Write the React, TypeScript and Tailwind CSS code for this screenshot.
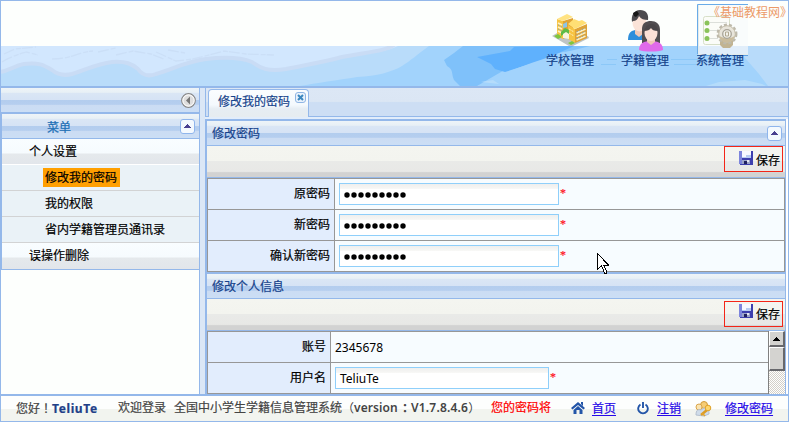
import type { ReactNode } from "react";

const line = "border-[#94b8ea]";
const panelBar =
  "bg-[linear-gradient(#eef4f8_0%,#e8f0f6_18%,#dae6f5_22%,#d6e3f5_48%,#b3cdee_50%,#b5ceef_68%,#cbdcf3_72%,#cbdef5_100%)]";

function CollapseButton() {
  return (
    <span className="flex h-[15px] w-[15px] shrink-0 items-center justify-center rounded-[3px] border border-[#8fb5ec] bg-[#f4f9fe]">
      <svg width="7" height="4" viewBox="0 0 7 4" shapeRendering="crispEdges">
        <path d="M3 0h1v1h1v1h1v1h1v1H0V3h1V2h1V1h1z" fill="#4a4090" />
      </svg>
    </span>
  );
}

function SchoolIcon() {
  return (
    <svg width="38" height="33" viewBox="0 0 38 33">
      <path d="M0 22 5 19l17 7 14-4 1 2-16 8-4 0z" fill="#bfc4c6" />
      <path d="M5 5 11 7v18l-6-3z" fill="#f7c443" />
      <path d="M11 7 21 4v17l-10 4z" fill="#e0a336" />
      <path d="M5 5 15 0l6 3-10 4z" fill="#ffe382" />
      <path d="M16 11l7 4v14l-7-4z" fill="#f7c443" />
      <path d="M23 15l12-5v14l-12 5z" fill="#e0a336" />
      <path d="M16 10l6-5 5 2 3-1 5 3-12 6z" fill="#ffdf74" />
      <path d="M6 9l4 2m-4 2 4 2m-4 2 4 2M24.500 19l9-4m-9 7.500 9-4m-9 7.500 9-4" stroke="#fff1c0" strokeWidth="1.800" />
      <path d="M6 11l4 2m-4 2 4 2M24.500 18l9-4m-9 7.500 9-4m-9 7.500 9-4" stroke="#8aa5ae" strokeDasharray="1.500 1.500" />
      <path d="M17 15l5 3m-5 1 5 3" stroke="#fff1c0" strokeDasharray="2 1" />
      <path d="M11 10l4-2v5l-4 1z" fill="#8cc4e8" />
      <path d="M9 18l4-4 4 2v5l-3-2-5 3z" fill="#5dbb48" />
      <path d="M11 20l3-2 3 2v5l-6-1z" fill="#f8f4df" />
      <path d="M2 22l4-2 4 3-4 2zm14 7 4-2 3 2-4 2z" fill="#7fc63e" />
    </svg>
  );
}

function PeopleIcon() {
  return (
    <svg width="37" height="42" viewBox="0 0 37 42">
      <path d="M1 30c0-8 4-10 9-10 6 0 10 3 10 10z" fill="#2f8edb" />
      <path d="M8 19h8v5l-4 3-4-3z" fill="#f0c8b8" />
      <ellipse cx="12.5" cy="13" rx="7" ry="8.5" fill="#fbe3d8" />
      <path d="M5 12C4 5 7 0 13 0c6 0 9 4 8 10-4 0-7-1-9-4-1 3-3 5-6 5z" fill="#4c4a4e" />
      <path d="M6 3l4-2 2 3-3 3-2-1z" fill="#171717" />
      <path d="M15 33V19c0-6 4-8 9-8s9 3 9 9v13z" fill="#514d50" />
      <path d="M12 40c0-7 5-9 12-9s12 2 12 9c-5 2-19 2-24 0z" fill="#e06aea" />
      <path d="M20 28h8v4l-4 3-4-3z" fill="#efc6b8" />
      <ellipse cx="24" cy="23" rx="6.5" ry="8" fill="#fbe0d6" />
      <path d="M17 21c1-5 4-7 8-7s6 4 6 7c-4 0-6-1-7-3-1 2-4 3-7 3z" fill="#4a4649" />
    </svg>
  );
}

function SystemIcon() {
  return (
    <svg width="51" height="53" viewBox="0 0 51 53">
      <path d="M0 50V0h51v50z" fill="#f8fbfc" fillOpacity=".85" />
      <path d="M0 42h51v8H0z" fill="#dceafa" fillOpacity=".7" />
      <path d="M.5 50V.5H51" fill="none" stroke="#69abe8" />
      <path d="M1.5 1v49.500H51" fill="none" stroke="#e4ebe9" />
      <path d="M0 51.5h51" stroke="#5b9fe2" />
      <rect x="6.500" y="12.500" width="26" height="28" rx="2" fill="#fbfcf8" stroke="#d7dfc8" />
      <path d="M13 18.500h17M13 26.500h8M13 34.500h8" stroke="#dcdfda" />
      <circle cx="10" cy="19" r="2.500" fill="#8ac35b" />
      <circle cx="10" cy="26.500" r="2.500" fill="#8ac35b" />
      <circle cx="10" cy="34.500" r="2.500" fill="#8ac35b" />
      <path d="M23 33h13v8l-3 3h-7l-3-3z" fill="#c1b391" />
      <circle cx="30" cy="30" r="9.200" fill="none" stroke="#bdb9ab" strokeWidth="2.500" strokeDasharray="3 2" />
      <circle cx="30" cy="30" r="8.300" fill="#e8e5db" stroke="#c4bda9" />
      <path d="M22.500 32c1 5 5 7 8 6.500s6-2 7-6.500c-4 3-10 3-15 0z" fill="#c9bb9b" />
      <circle cx="30" cy="30" r="4.300" fill="#f2f1ea" stroke="#a8a498" strokeWidth="1.300" />
      <path d="M28.500 28h3v4h-3z" fill="none" stroke="#b1a992" />
    </svg>
  );
}

function HeaderBackdrop() {
  return (
    <svg className="absolute top-[45px] left-0" width="787" height="40" viewBox="1 46 787 40" preserveAspectRatio="none">
      <path d="M0 46h789v40H0z" fill="#d2e7fe" />
      <path d="M0 73c8-1 14-6 24-8 14-2 20 1 28 6 6 5 12 6 20 4 14-4 24-10 40-12 14-1 20 2 26 7 4 6 10 8 18 5 18-5 28-12 50-15 18-2 34-2 46 3 8 6 16 10 34 7 18-4 34-6 56-12 26-5 44-6 56-12h40v40H0z" fill="#b9dcfa" />
      <path d="M0 72c8-1 14-6 24-8 14-2 20 1 28 6 6 5 12 6 20 4 14-4 24-10 40-12 14-1 20 2 26 7 4 6 10 8 18 5 18-5 28-12 50-15 18-2 34-2 46 3 8 6 16 10 34 7 18-4 34-6 56-12 26-5 44-6 52-12" fill="none" stroke="#c9dcf5" strokeWidth="4" />
      <path d="M2 62c10-6 18-8 24-10l12 3m14 4c20 0 25-7 41-8m23 4 17-4 18 3 13 5M156 52l20 9 17-2 31-8 22 3 28 1M4 54l11-5 21-2m62 5 18-4m52 2 17 3" fill="none" stroke="#cbdff7" strokeWidth="1.300" strokeDasharray="11 2 5 1" />
      <path d="M300 86c16-3 38-6 57-9 20-1 35-5 45-11 8-5 16-12 27-20h360v40z" fill="#a2d3fc" />
      <path d="M463 46h210l-60 2-50 4-50 13-36 21h-17l-6-6c-3-6 0-10-7-14l-3-6 10-7z" fill="#7fc1fa" />
      <path d="M477 57l33-6 4-4 60-1-31 14-38 12-10-3-4-5z" fill="#5fb1fd" />
      <path d="M478 86c23-13 50-22 80-32l32-8h96l22 40z" fill="#a2d3fc" />
      <path d="M741 46h48v40h-21l-9-12-13-15-8-8z" fill="#b8dbfa" />
      <path d="M706 86l13-4 26-2 17 4 4 2zM481 82l12-2 6 4z" fill="#b5dcfb" />
      <path d="M601 64.500h15m58 0h22M607 59.500h10m54 0h40" stroke="#8cc8f8" />
    </svg>
  );
}

function FloppyIcon() {
  return (
    <svg width="14" height="14" viewBox="0 0 14 14" shapeRendering="crispEdges">
      <path d="M0 0h14v14H1l-1-1z" fill="#3d3fae" />
      <path d="M0 0h3v13H0z" fill="#7d85dc" />
      <path d="M3 0h9v7H3z" fill="#f7f9ff" />
      <path d="M7 4h5v3H3V6h4z" fill="#b8ccf1" />
      <path d="M3 9h8v4H3z" fill="#9aa2c8" />
      <path d="M5 10h3v3H5z" fill="#20205f" />
      <path d="M8 9h2v2H8z" fill="#e7e7f2" />
    </svg>
  );
}

function NavButton({ label, children, lift }: { label: string; children: ReactNode; lift: string }) {
  return (
    <div className="w-[75px] pl-[14px]">
      <div className={`h-[51px] ${lift}`}>{children}</div>
      <div className="h-[18px] text-[12px] leading-[18px] whitespace-nowrap text-[#15428b]">{label}</div>
    </div>
  );
}

function SaveBar({ lowered }: { lowered?: boolean }) {
  return (
    <div className={`flex h-[32px] justify-end border-b ${line} bg-[linear-gradient(#f4f5f0_0%,#f3f4ef_48%,#e9eae8_50%,#e8e8e6_82%,#d2d2d2_86%,#d2d2d2_100%)] ${lowered ? "pt-[2px]" : ""} pr-[2px]`}>
      <button className="flex h-[26px] w-[59px] items-center border border-[#f32518] pl-[14px] text-[12px] text-black">
        <span className={lowered ? "-mt-[6px]" : "-mt-[3px]"}><FloppyIcon /></span>
        <span className={`ml-[3px] leading-[18px] whitespace-nowrap ${lowered ? "pt-[1px]" : "pt-[3px]"}`}>保存</span>
      </button>
    </div>
  );
}

function PanelTitle({ title, collapse }: { title: string; collapse?: boolean }) {
  return (
    <div className={`flex h-[25px] items-center justify-between border-b ${line} ${panelBar} pr-[3px] pl-[5px]`}>
      <span className="pt-[2px] text-[12px] leading-[18px] text-[#15428b]">{title}</span>
      {collapse && <CollapseButton />}
    </div>
  );
}

function Row({ label, labelWidth, children }: { label: string; labelWidth: string; children: ReactNode }) {
  return (
    <div className="flex h-[31px] shrink-0 border-b border-[#979797] bg-[#f7fcff]">
      <div className={`${labelWidth} shrink-0 border-r border-[#979797] bg-[#e2edfd] pt-[6px] pr-[4px] text-right text-[12px] leading-[18px]`}>{label}</div>
      <div className="flex pt-[4px] pl-[4px]">{children}</div>
    </div>
  );
}

function Field({ width, children }: { width: string; children: ReactNode }) {
  return (
    <>
      <div className={`flex h-[22px] ${width} items-center border border-[#8fcffa] bg-[linear-gradient(#efefee_0%,#f6f6f4_22%,#ffffff_26%,#ffffff_100%)] pl-[4px]`}>{children}</div>
      <span className="ml-px pt-px font-['Liberation_Serif',serif] text-[12px] leading-[18px] text-[#ff1020]">*</span>
    </>
  );
}

function Dots() {
  return (
    <svg className="mt-[2px]" width="64" height="6" viewBox="0 0 64 6">
      {[0, 1, 2, 3, 4, 5, 6, 7, 8].map((i) => (
        <circle key={i} cx={3 + i * 7} cy="3" r="2.700" fill="#000" />
      ))}
    </svg>
  );
}

function SubItem({ label, active }: { label: string; active?: boolean }) {
  return (
    <div className="flex h-[26px] items-center border-b border-[#d2d3d4] bg-[#eaf2f7] pl-[41px] text-[12px]">
      <span className={active ? "h-[19px] bg-[#ff9f00] pr-[3px] pl-[2px] leading-[19px]" : "pl-[2px] leading-[18px]"}>{label}</span>
    </div>
  );
}

function TopItem({ label, last }: { label: string; last?: boolean }) {
  return (
    <div className={`h-[26px] border-b ${last ? "border-[#e3e6ea]" : "border-white"} bg-[linear-gradient(#f9fdff_0%,#f6fbfe_56%,#e5e9ec_60%,#e2e6eb_100%)] pt-[4px] pl-[27px] text-[12px] leading-[18px]`}>
      {label}
    </div>
  );
}

export default function App() {
  return (
    <div className={`relative flex h-[422px] w-[789px] flex-col overflow-hidden border ${line} bg-[#fdfffd] font-['Noto_Sans','Noto_Sans_CJK_SC',sans-serif] text-black [-webkit-text-stroke:0.2px]`}>
      <header className={`relative h-[87px] shrink-0 border-b-2 ${line}`}>
        <HeaderBackdrop />
        <nav className="relative flex pl-[531px]">
          <NavButton label="学校管理" lift="pt-[13px] pl-[6px]"><SchoolIcon /></NavButton>
          <NavButton label="学籍管理" lift="pt-[9px] pl-[6px]"><PeopleIcon /></NavButton>
          <NavButton label="系统管理" lift="pt-[3px] pl-[1px]"><SystemIcon /></NavButton>
        </nav>
        <span className="absolute top-[2px] left-[713px] font-['Noto_Sans_CJK_SC',sans-serif] text-[12px] leading-[18px] whitespace-nowrap text-[#ec9a68] [-webkit-text-stroke:0] [font-feature-settings:'halt']">《基础教程网》</span>
      </header>

      <div className="flex h-[306px] shrink-0 bg-[#dbe7f6]">
        <aside className={`w-[199px] shrink-0 border-r ${line} bg-[#fdfffd]`}>
          <div className={`flex h-[24px] items-center justify-end ${panelBar} pr-[3px]`}>
            <svg width="15" height="15" viewBox="0 0 15 15">
              <circle cx="7.500" cy="7.500" r="6.800" fill="#eee" stroke="#888" strokeWidth="1.200" />
              <circle cx="7.500" cy="7.500" r="5.600" fill="#dedede" stroke="#fff" />
              <path d="M9 3.500v8L5 7.500z" fill="#777" />
            </svg>
          </div>
          <div className={`border-t-2 border-b border-l ${line}`}>
            <div className={`flex h-[25px] items-center justify-between border-b ${line} ${panelBar} pr-[4px] pl-[45px]`}>
              <span className="pt-[3px] text-[12px] leading-[18px] text-[#1d6fb5]">菜单</span>
              <CollapseButton />
            </div>
            <TopItem label="个人设置" />
            <SubItem label="修改我的密码" active />
            <SubItem label="我的权限" />
            <SubItem label="省内学籍管理员通讯录" />
            <TopItem label="误操作删除" last />
          </div>
        </aside>

        <main className="ml-[5px] flex min-w-0 flex-1 flex-col bg-white">
          <div className={`flex h-[29px] shrink-0 items-end border-b border-l ${line} bg-[linear-gradient(#dce7f5_0%,#dbe6f4_48%,#cddef4_52%,#cddef4_100%)] pl-[2px]`}>
            <div className={`-mb-px flex h-[28px] w-[101px] rounded-t-[4px] border border-b-0 ${line} bg-[linear-gradient(#fbfdff_0%,#f4f9fd_55%,#e6edf3_70%,#e6ecf0_100%)] pt-[3px] pl-[9px]`}>
              <span className="text-[12px] leading-[18px] whitespace-nowrap text-[#15428b]">修改我的密码</span>
              <span className="ml-[5px] -mt-px flex h-[11px] w-[11px] items-center justify-center rounded-[3px] border border-[#8fb5e4] bg-[#e9f2fc]">
                <svg width="7" height="7" viewBox="0 0 7 7"><path d="M1 1l5 5M6 1 1 6" stroke="#3b87bf" strokeWidth="2" /></svg>
              </span>
            </div>
          </div>
          <div className="h-[2px] shrink-0 bg-[#e2edfb]" />
          <div className={`mr-[2px] flex min-h-0 flex-1 flex-col border-t-2 border-r border-l-2 ${line}`}>
            <PanelTitle title="修改密码" collapse />
            <SaveBar />
            <div className="shrink-0 border-t border-r border-l border-[#979797]">
              <Row label="原密码" labelWidth="w-[127px]"><Field width="w-[220px]"><Dots /></Field></Row>
              <Row label="新密码" labelWidth="w-[127px]"><Field width="w-[220px]"><Dots /></Field></Row>
              <Row label="确认新密码" labelWidth="w-[127px]"><Field width="w-[220px]"><Dots /></Field></Row>
            </div>
            <div className={`shrink-0 border-t-2 ${line}`}>
              <PanelTitle title="修改个人信息" />
              <SaveBar lowered />
            </div>
            <div className="flex h-[63px] shrink-0 bg-[#f7fcff]">
              <div className="min-w-0 flex-1 border-t border-l border-[#979797]">
                <Row label="账号" labelWidth="w-[123px]">
                  <span className="pt-[3px] text-[12px] leading-[18px] [-webkit-text-stroke:0]">2345678</span>
                </Row>
                <Row label="用户名" labelWidth="w-[123px]">
                  <Field width="w-[214px]"><span className="pt-px text-[12px] leading-[18px] [-webkit-text-stroke:0]">TeliuTe</span></Field>
                </Row>
              </div>
              <div className="flex w-[17px] shrink-0 flex-col border-l border-[#808080] bg-[repeating-conic-gradient(#ffffff_0_25%,#d4d0c8_0_50%)] bg-[length:2px_2px]">
                <div className="flex h-[16px] items-center justify-center border-t border-r-2 border-b-2 border-l border-t-white border-r-[#68686c] border-b-[#68686c] border-l-white bg-[#d4d3d0]">
                  <svg width="7" height="4" viewBox="0 0 7 4" shapeRendering="crispEdges"><path d="M3 0h1v1h1v1h1v1h1v1H0V3h1V2h1V1h1z" /></svg>
                </div>
                <div className="h-[24px] border-t border-r-2 border-b-2 border-l border-t-white border-r-[#68686c] border-b-[#68686c] border-l-white bg-[#d4d3d0]" />
              </div>
            </div>
          </div>
        </main>
      </div>

      <footer className={`flex min-h-0 flex-1 border-t-2 ${line} bg-[linear-gradient(#fdfefd_0%,#fdfefd_50%,#f2f4ef_52%,#f2f4ef_100%)] pt-[3px] pl-[15px] font-['Noto_Sans','Noto_Sans_CJK_SC',sans-serif] text-[12px] leading-[18px] whitespace-nowrap text-[#444]`}>
        <span className="w-[102px]">您好<span lang="zh-TW" className="font-['Noto_Sans_CJK_TC',sans-serif]">！</span><b className="tracking-[0.600px] text-[#224088]">TeliuTe</b></span>
        <span className="w-[56px]">欢迎登录</span>
        <span className="flex w-[317px]">
          <span>全国中小学生学籍信息管理系统</span>
          <span lang="zh-TW" className="w-[12px] font-['Noto_Sans_CJK_TC',sans-serif] [-webkit-text-stroke:0]">（</span>
          <b className="w-[45px] font-semibold tracking-[0.100px] [-webkit-text-stroke:0]">version</b>
          <b lang="zh-TW" className="w-[12px] font-['Noto_Sans_CJK_TC',sans-serif] [-webkit-text-stroke:0]">：</b>
          <b className="font-semibold tracking-[0.200px] [-webkit-text-stroke:0]">V1.7.8.4.6</b>
          <span lang="zh-TW" className="font-['Noto_Sans_CJK_TC',sans-serif] [-webkit-text-stroke:0]">）</span>
        </span>
        <span className="w-[80px] text-[#ff0000]">您的密码将</span>
        <svg className="mt-[3px]" width="14" height="12" viewBox="0 0 14 12">
          <path d="M7 0 14 6l-1.500 1.500L7 3 1.500 7.500 0 6zM10 0h2v4l-2-2z" fill="#2355a8" />
          <path d="M7 4l4.500 4v4h-3V8h-3v4h-3V8z" fill="#2355a8" />
        </svg>
        <a className="ml-[7px] pt-px text-[#2508e8] underline underline-offset-2">首页</a>
        <svg className="mt-[3px] ml-[21px]" width="12" height="13" viewBox="0 0 12 13">
          <path d="M3.500 2.500a4.800 4.800 0 1 0 5 0M6 0v6" fill="none" stroke="#2355a8" strokeWidth="1.900" />
        </svg>
        <a className="ml-[8px] pt-px text-[#2508e8] underline underline-offset-2">注销</a>
        <svg className="mt-[2px] ml-[14px]" width="17" height="16" viewBox="0 0 17 16">
          <circle cx="9" cy="4" r="3.500" fill="#f6cd75" stroke="#d19a38" />
          <circle cx="4" cy="6" r="3" fill="#fbe4b0" stroke="#d9a54c" />
          <path d="M1 14c0-5 2-6 5-5l3-2c4 0 5 2 5 6l-5 2z" fill="#cfdcea" stroke="#b4bfce" />
          <path d="M6 14l6-5" stroke="#dc9c23" strokeWidth="2.500" />
          <circle cx="13" cy="7" r="2.800" fill="#ffd66d" stroke="#dfa22a" />
          <path d="M7 12l3 3" stroke="#e4a42b" strokeWidth="1.500" />
        </svg>
        <a className="ml-[13px] pt-px text-[#2508e8] underline underline-offset-2">修改密码</a>
      </footer>

      <svg className="absolute top-[252px] left-[596px]" width="12" height="21" viewBox="0 0 12 21" shapeRendering="crispEdges">
        <path d="M.5.500v16l4-4 3 7.500h2v-2l-3-6h5z" fill="#fff" stroke="#000" />
      </svg>
    </div>
  );
}
